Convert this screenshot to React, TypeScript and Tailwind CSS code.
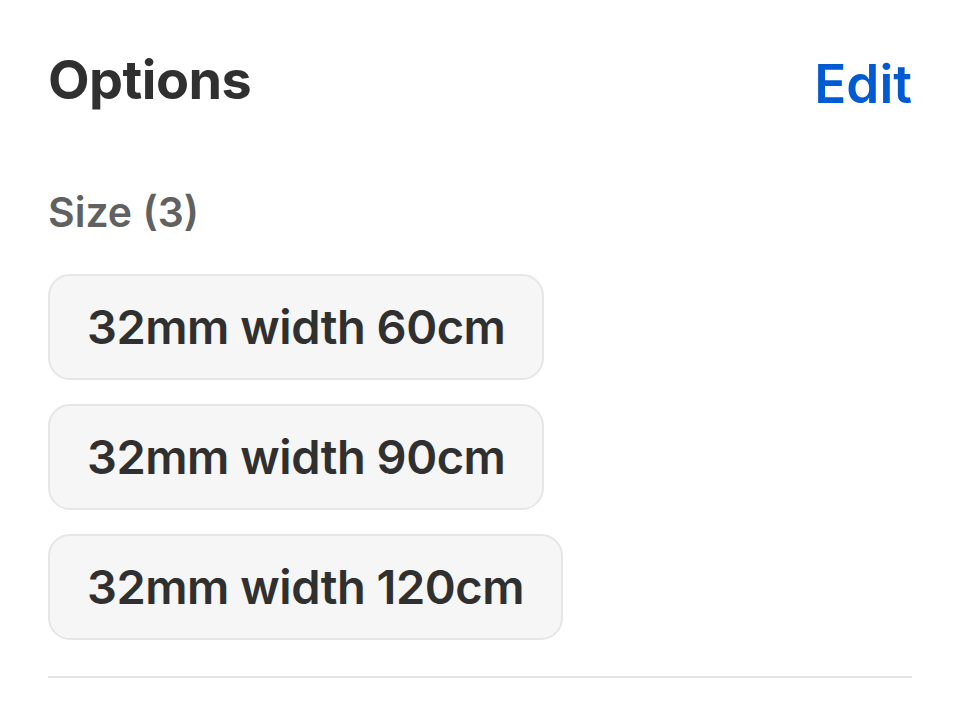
import React from 'react';

const sizes = ['32mm width 60cm', '32mm width 90cm', '32mm width 120cm'];

const App: React.FC = () => {
  return (
    <div className="min-h-[702px] w-[960px] bg-white px-12 pt-[42px] text-[#303030] font-['Inter',sans-serif]">
      {/* Header */}
      <div className="flex items-start justify-between">
        <h2 className="text-[54px] font-bold leading-[76px] tracking-[-0.01em]">Options</h2>
        <button type="button" className="text-[53px] font-semibold leading-[76px] text-[#005bd3] mt-[4px]">
          Edit
        </button>
      </div>

      {/* Size option */}
      <div className="mt-[66px] text-[41px] font-semibold leading-[48px] text-[#616161]">Size (3)</div>

      <div className="mt-[38px] flex flex-col items-start gap-6">
        {sizes.map((s) => (
          <div
            key={s}
            className="h-[106px] rounded-[22px] border-2 border-[#e6e6e6] bg-[#f6f6f6] px-[37px] flex items-center text-[47px] font-semibold tracking-[-0.01em]"
          >
            {s}
          </div>
        ))}
      </div>

      <div className="mt-9 h-[2px] bg-[#e3e3e3]"></div>
    </div>
  );
};

export default App;
